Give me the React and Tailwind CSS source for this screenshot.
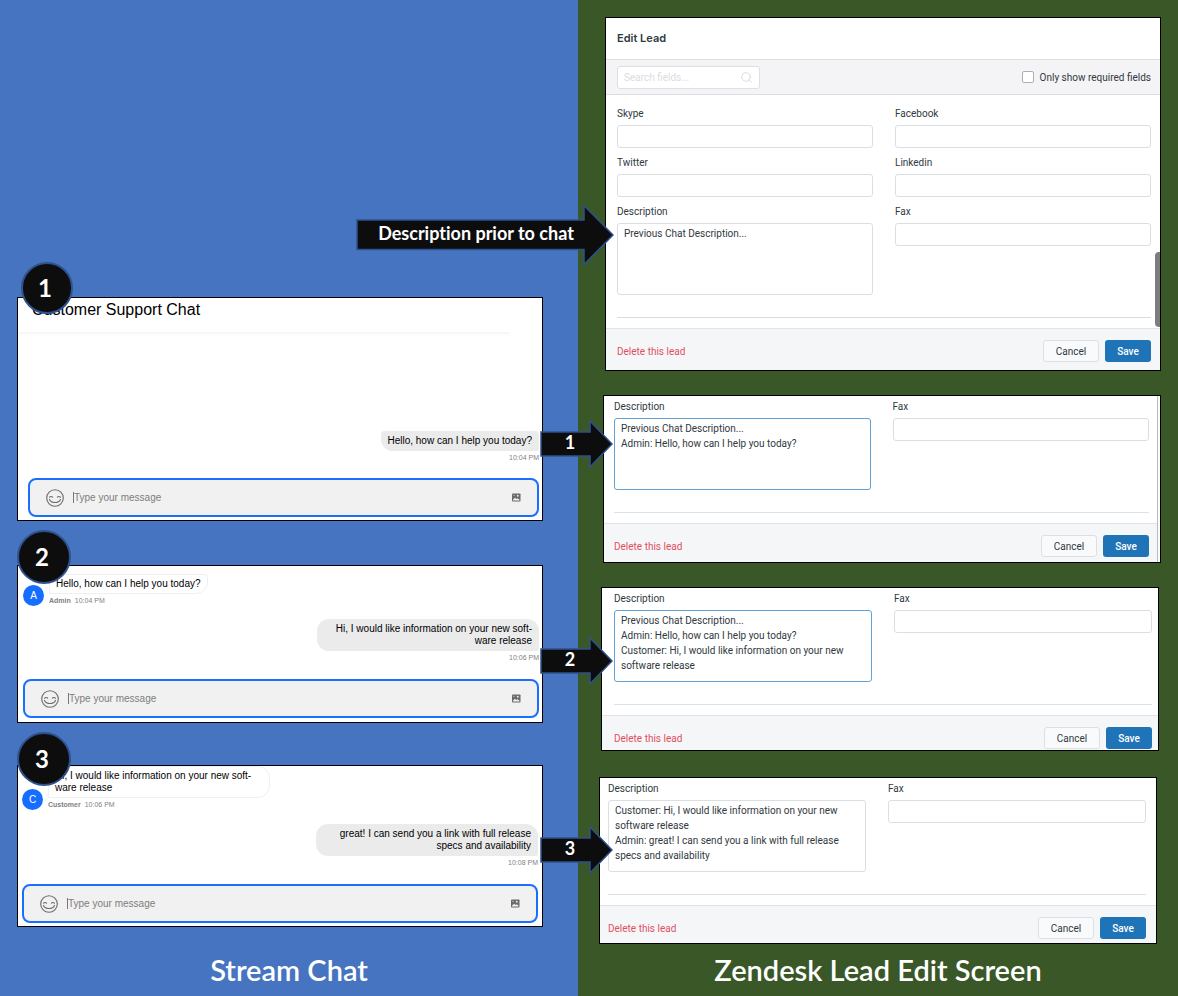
import React, { useId } from "react";
import { Search } from "lucide-react";

function Smiley() {
  return (
    <svg viewBox="0 0 28 28" className="size-[18px]" aria-hidden="true">
      <g fill="none" stroke="#6f6f6f" strokeWidth="1.8" strokeLinecap="round">
        <circle cx="14" cy="14" r="12.900" />
        <path d="M5.500 12.600c1.200-1.300 3.600-1.300 4.800 0M17.700 12.600c1.200-1.300 3.600-1.300 4.800 0" />
        <path d="M5.500 16.200c2.800 6.400 14.200 6.400 17 0" />
      </g>
    </svg>
  );
}

function PictureIcon() {
  return (
    <svg viewBox="0 0 18 18" className="size-[9px]" aria-hidden="true">
      <rect y="1" width="17" height="16" rx="1.5" fill="#6b6b6b" />
      <path d="M2 13.500 6 9.500l3 2.500 2.500-1.500L15 13.500V15H2Z" fill="#f1f1f1" />
      <circle cx="11.500" cy="5.500" r="1.800" fill="#f1f1f1" />
      <circle cx="4" cy="4.500" r="1.100" fill="#f1f1f1" />
    </svg>
  );
}

function Composer() {
  return (
    <div className="flex h-[39px] items-center rounded-lg border-2 border-[#1a6fff] bg-[#f1f1f1] px-4">
      <button type="button" aria-label="Emoji">
        <Smiley />
      </button>
      <span className="ml-[9px] h-[11px] w-px bg-[#777]" />
      <input
        aria-label="Message"
        placeholder="Type your message"
        className="min-w-0 flex-1 bg-transparent text-[10px] leading-4 outline-none placeholder:text-[#7d7d7d]"
      />
      <button type="button" aria-label="Attach a picture">
        <PictureIcon />
      </button>
    </div>
  );
}

function Sent({ time, shape = "rounded-xl", children }) {
  return (
    <div className="flex flex-col items-end">
      <p className={`rounded-br-xs bg-[#ebebeb] py-1 pr-[7px] pl-1.5 text-right text-[10px] leading-3 text-black ${shape}`}>
        {children}
      </p>
      <time className="mt-px text-[7px] leading-3 text-[#7f7f7f]">{time}</time>
    </div>
  );
}

function Received({ initial, name, time, shape = "rounded-r-xl", children }) {
  return (
    <div className="flex items-end gap-[5px]">
      <span className="mb-px flex size-[21px] items-center justify-center rounded-full bg-[#156eff] text-[10px] text-white">
        {initial}
      </span>
      <div className="flex flex-col items-start">
        <p className={`border border-[#f0f0f0] px-1.5 py-[3px] text-[10px] leading-3 text-black ${shape}`}>
          {children}
        </p>
        <p className="mt-px text-[7px] leading-3 text-[#7f7f7f]">
          <b className="mr-1">{name}</b>
          <time>{time}</time>
        </p>
      </div>
    </div>
  );
}

function Step({ className, children }) {
  return (
    <span
      className={`absolute flex items-center justify-center rounded-full border-2 border-[#2f528f] bg-[#0d0d0d] pr-1 font-[Lato,sans-serif] text-2xl font-bold text-white ${className}`}
    >
      {children}
    </span>
  );
}

function ChatPanel({ className, children }) {
  return (
    <section className={`relative flex flex-col border border-black bg-white ${className}`}>
      {children}
    </section>
  );
}

function Arrow({ className, children }) {
  return (
    <div className={`absolute z-10 h-[50px] w-[73px] ${className}`}>
      <svg viewBox="0 0 73 50" className="size-full" aria-hidden="true">
        <path d="M1 13H50V2L72 25 50 48V37H1Z" fill="#0d0d0d" stroke="#2f528f" strokeWidth="1.500" />
      </svg>
      <span className="absolute inset-y-0 left-0 flex w-[60px] items-center justify-center pb-1 font-[Lato,sans-serif] text-lg font-bold text-white">
        {children}
      </span>
    </div>
  );
}

function Field({ label, text, focused }) {
  const id = useId();
  const tone = focused ? "border-[#62a3d6]" : "border-[#dadfe4]";
  return (
    <div className="flex flex-col">
      <label htmlFor={id} className="mb-1 leading-[14px]">
        {label}
      </label>
      {text === undefined ? (
        <input id={id} className={`h-[23px] w-full rounded-[3px] border bg-white px-1.5 ${tone}`} />
      ) : (
        <textarea
          id={id}
          defaultValue={text}
          className={`block h-[72px] w-full resize-none overflow-hidden rounded-[3px] border bg-white px-1.5 py-0.5 leading-[15px] ${tone}`}
        />
      )}
    </div>
  );
}

function Actions({ className }) {
  return (
    <footer className={`flex items-center border-t border-[#e0e3e7] bg-[#f5f6f8] pt-[11px] ${className}`}>
      <button type="button" className="text-[#e0505f]">
        Delete this lead
      </button>
      <button
        type="button"
        className="ml-auto h-[22px] w-14 rounded-[3px] border border-[#dcdfe4] bg-[#f9fafb]"
      >
        Cancel
      </button>
      <button
        type="button"
        className="ml-1.5 h-[22px] w-[46px] rounded-[3px] bg-[#1f73b7] font-medium text-white"
      >
        Save
      </button>
    </footer>
  );
}

function LeadPanel({ className, children }) {
  return (
    <section
      className={`relative border border-black bg-white font-[Roboto,sans-serif] text-[10px] text-[#2f3941] ${className}`}
    >
      {children}
    </section>
  );
}

function LeadExcerpt({ className, inset, footer, text, focused, children }) {
  return (
    <LeadPanel className={className}>
      <div className={`pt-1 pb-2.5 ${inset}`}>
        <div className="grid grid-cols-2 gap-x-[22px]">
          <Field label="Description" text={text} focused={focused} />
          <Field label="Fax" />
        </div>
        <hr className="mt-[22px] border-[#dde1e5]" />
      </div>
      <Actions className={`${inset} ${footer}`} />
      {children}
    </LeadPanel>
  );
}

export default function App() {
  return (
    <main className="grid min-h-screen grid-cols-[578fr_600fr]">
      <div className="flex flex-col bg-[#4674c1] pt-[297px] font-['Liberation_Sans',Arial,sans-serif]">
        <div className="flex flex-col pr-[35px] pl-[17px]">
          <ChatPanel className="mb-11 pb-[3px]">
            <header className="pb-2.5">
              <h1 className="pl-3.5 text-base leading-6 text-black">Customer Support Chat</h1>
            </header>
            <div className="mr-8 h-1 bg-linear-to-b from-[#f5f5f5] to-white" />
            <div className="pt-[95px] pr-[3px] pl-2.5">
              <Sent time="10:04 PM" shape="rounded-t-sm rounded-bl-xl">
                Hello, how can I help you today?
              </Sent>
              <div className="pt-3.5">
                <Composer />
              </div>
            </div>
            <Step className="-top-9 left-[3px] size-[52px]">1</Step>
          </ChatPanel>

          <ChatPanel className="mb-[42px] pt-2 pr-[3px] pb-1 pl-[5px]">
            <Received initial="A" name="Admin" time="10:04 PM" shape="rounded-t-sm rounded-br-xl">
              Hello, how can I help you today?
            </Received>
            <div className="pt-3 pb-[15px]">
              <Sent time="10:06 PM">
                <span className="block w-[209px]">
                  Hi, I would like information on your new soft-
                  <br />
                  ware release
                </span>
              </Sent>
            </div>
            <Composer />
            <Step className="-top-9 -left-px size-[54px]">2</Step>
          </ChatPanel>

          <ChatPanel className="pr-1 pb-[3px] pl-1">
            <Received initial="C" name="Customer" time="10:06 PM">
              <span className="block w-[208px]">
                Hi, I would like information on your new soft-
                <br />
                ware release
              </span>
            </Received>
            <div className="pt-[13px] pb-[15px]">
              <Sent time="10:08 PM">
                <span className="block w-[209px]">
                  great! I can send you a link with full release
                  <br />
                  specs and availability
                </span>
              </Sent>
            </div>
            <Composer />
            <Step className="-top-[34px] -left-px size-[54px]">3</Step>
          </ChatPanel>
        </div>

        <h2 className="mt-auto pt-3 pb-2 text-center font-[Lato,sans-serif] text-[29px] leading-9 font-semibold text-white">
          Stream Chat
        </h2>
      </div>

      <div className="flex flex-col bg-[#395727] pt-[17px]">
        <LeadPanel className="mr-[17px] mb-6 ml-[27px]">
          <h1 className="pl-[11px] font-[Inter,sans-serif] text-[11px] leading-[41px] font-semibold">
            Edit Lead
          </h1>
          <div className="flex h-9 items-center border-y border-[#dadde2] bg-[#f4f4f7] pr-[9px] pl-[11px]">
            <div className="flex h-[23px] w-[143px] items-center rounded-[3px] border border-[#dcdfe4] bg-white px-1.5">
              <input
                aria-label="Search fields"
                placeholder="Search fields..."
                className="min-w-0 flex-1 outline-none placeholder:text-[#dadde0]"
              />
              <Search className="size-[13px] text-[#d0d4d8]" strokeWidth={1.5} />
            </div>
            <label className="ml-auto flex items-center gap-1.5">
              <input
                type="checkbox"
                className="size-3 appearance-none rounded-[2px] border border-[#a9b0b8] bg-white"
              />
              Only show required fields
            </label>
          </div>
          <div className="pt-3 pr-[9px] pb-2.5 pl-[11px]">
            <div className="grid grid-cols-2 gap-x-[22px] gap-y-2">
              <Field label="Skype" />
              <Field label="Facebook" />
              <Field label="Twitter" />
              <Field label="Linkedin" />
              <Field label="Description" text="Previous Chat Description..." />
              <Field label="Fax" />
            </div>
            <hr className="mt-[22px] border-[#d8dce1]" />
          </div>
          <Actions className="pr-[9px] pb-2 pl-[11px]" />
          <div className="absolute right-0 bottom-[43px] h-[75px] w-[5px] rounded-l-sm bg-[#7d7d7d]" />
          <div className="absolute top-[185px] -left-[250px] z-10 h-16 w-[258px]">
            <svg viewBox="0 0 258 64" className="size-full" aria-hidden="true">
              <path d="M1 17H228V2.500L257 32 228 61.500V46.500H1Z" fill="#0d0d0d" stroke="#2f528f" strokeWidth="1.500" />
            </svg>
            <span className="absolute inset-y-0 left-0 flex w-[240px] items-center justify-center pb-1 font-[Lato,sans-serif] text-lg font-bold whitespace-nowrap text-white [font-variant-ligatures:none]">
              Description prior to chat
            </span>
          </div>
        </LeadPanel>

        <LeadExcerpt
          className="mr-[17px] mb-6 ml-[25px]"
          inset="pl-2.5 pr-[11px]"
          footer="pb-[5px]"
          focused
          text={"Previous Chat Description...\nAdmin: Hello, how can I help you today?"}
        >
          <div className="absolute inset-y-0 right-0 w-[3px] border-l border-[#b9bcc0] bg-[#fafafa]" />
          <Arrow className="top-[23px] -left-[64px]">1</Arrow>
        </LeadExcerpt>

        <LeadExcerpt
          className="mr-[19px] mb-[26px] ml-[23px]"
          inset="pl-3 pr-1.5"
          footer="pb-px"
          focused
          text={
            "Previous Chat Description...\nAdmin: Hello, how can I help you today?\nCustomer: Hi, I would like information on your new\nsoftware release"
          }
        >
          <Arrow className="top-12 -left-[62px]">2</Arrow>
        </LeadExcerpt>

        <LeadExcerpt
          className="mr-[21px] ml-[21px]"
          inset="pl-2 pr-2.5"
          footer="pb-1"
          text={
            "Customer: Hi, I would like information on your new\nsoftware release\nAdmin: great! I can send you a link with full release\nspecs and availability"
          }
        >
          <Arrow className="top-[47px] -left-[60px]">3</Arrow>
        </LeadExcerpt>

        <h2 className="mt-auto pb-2 text-center font-[Lato,sans-serif] text-[29px] leading-9 font-semibold text-white">
          Zendesk Lead Edit Screen
        </h2>
      </div>
    </main>
  );
}
